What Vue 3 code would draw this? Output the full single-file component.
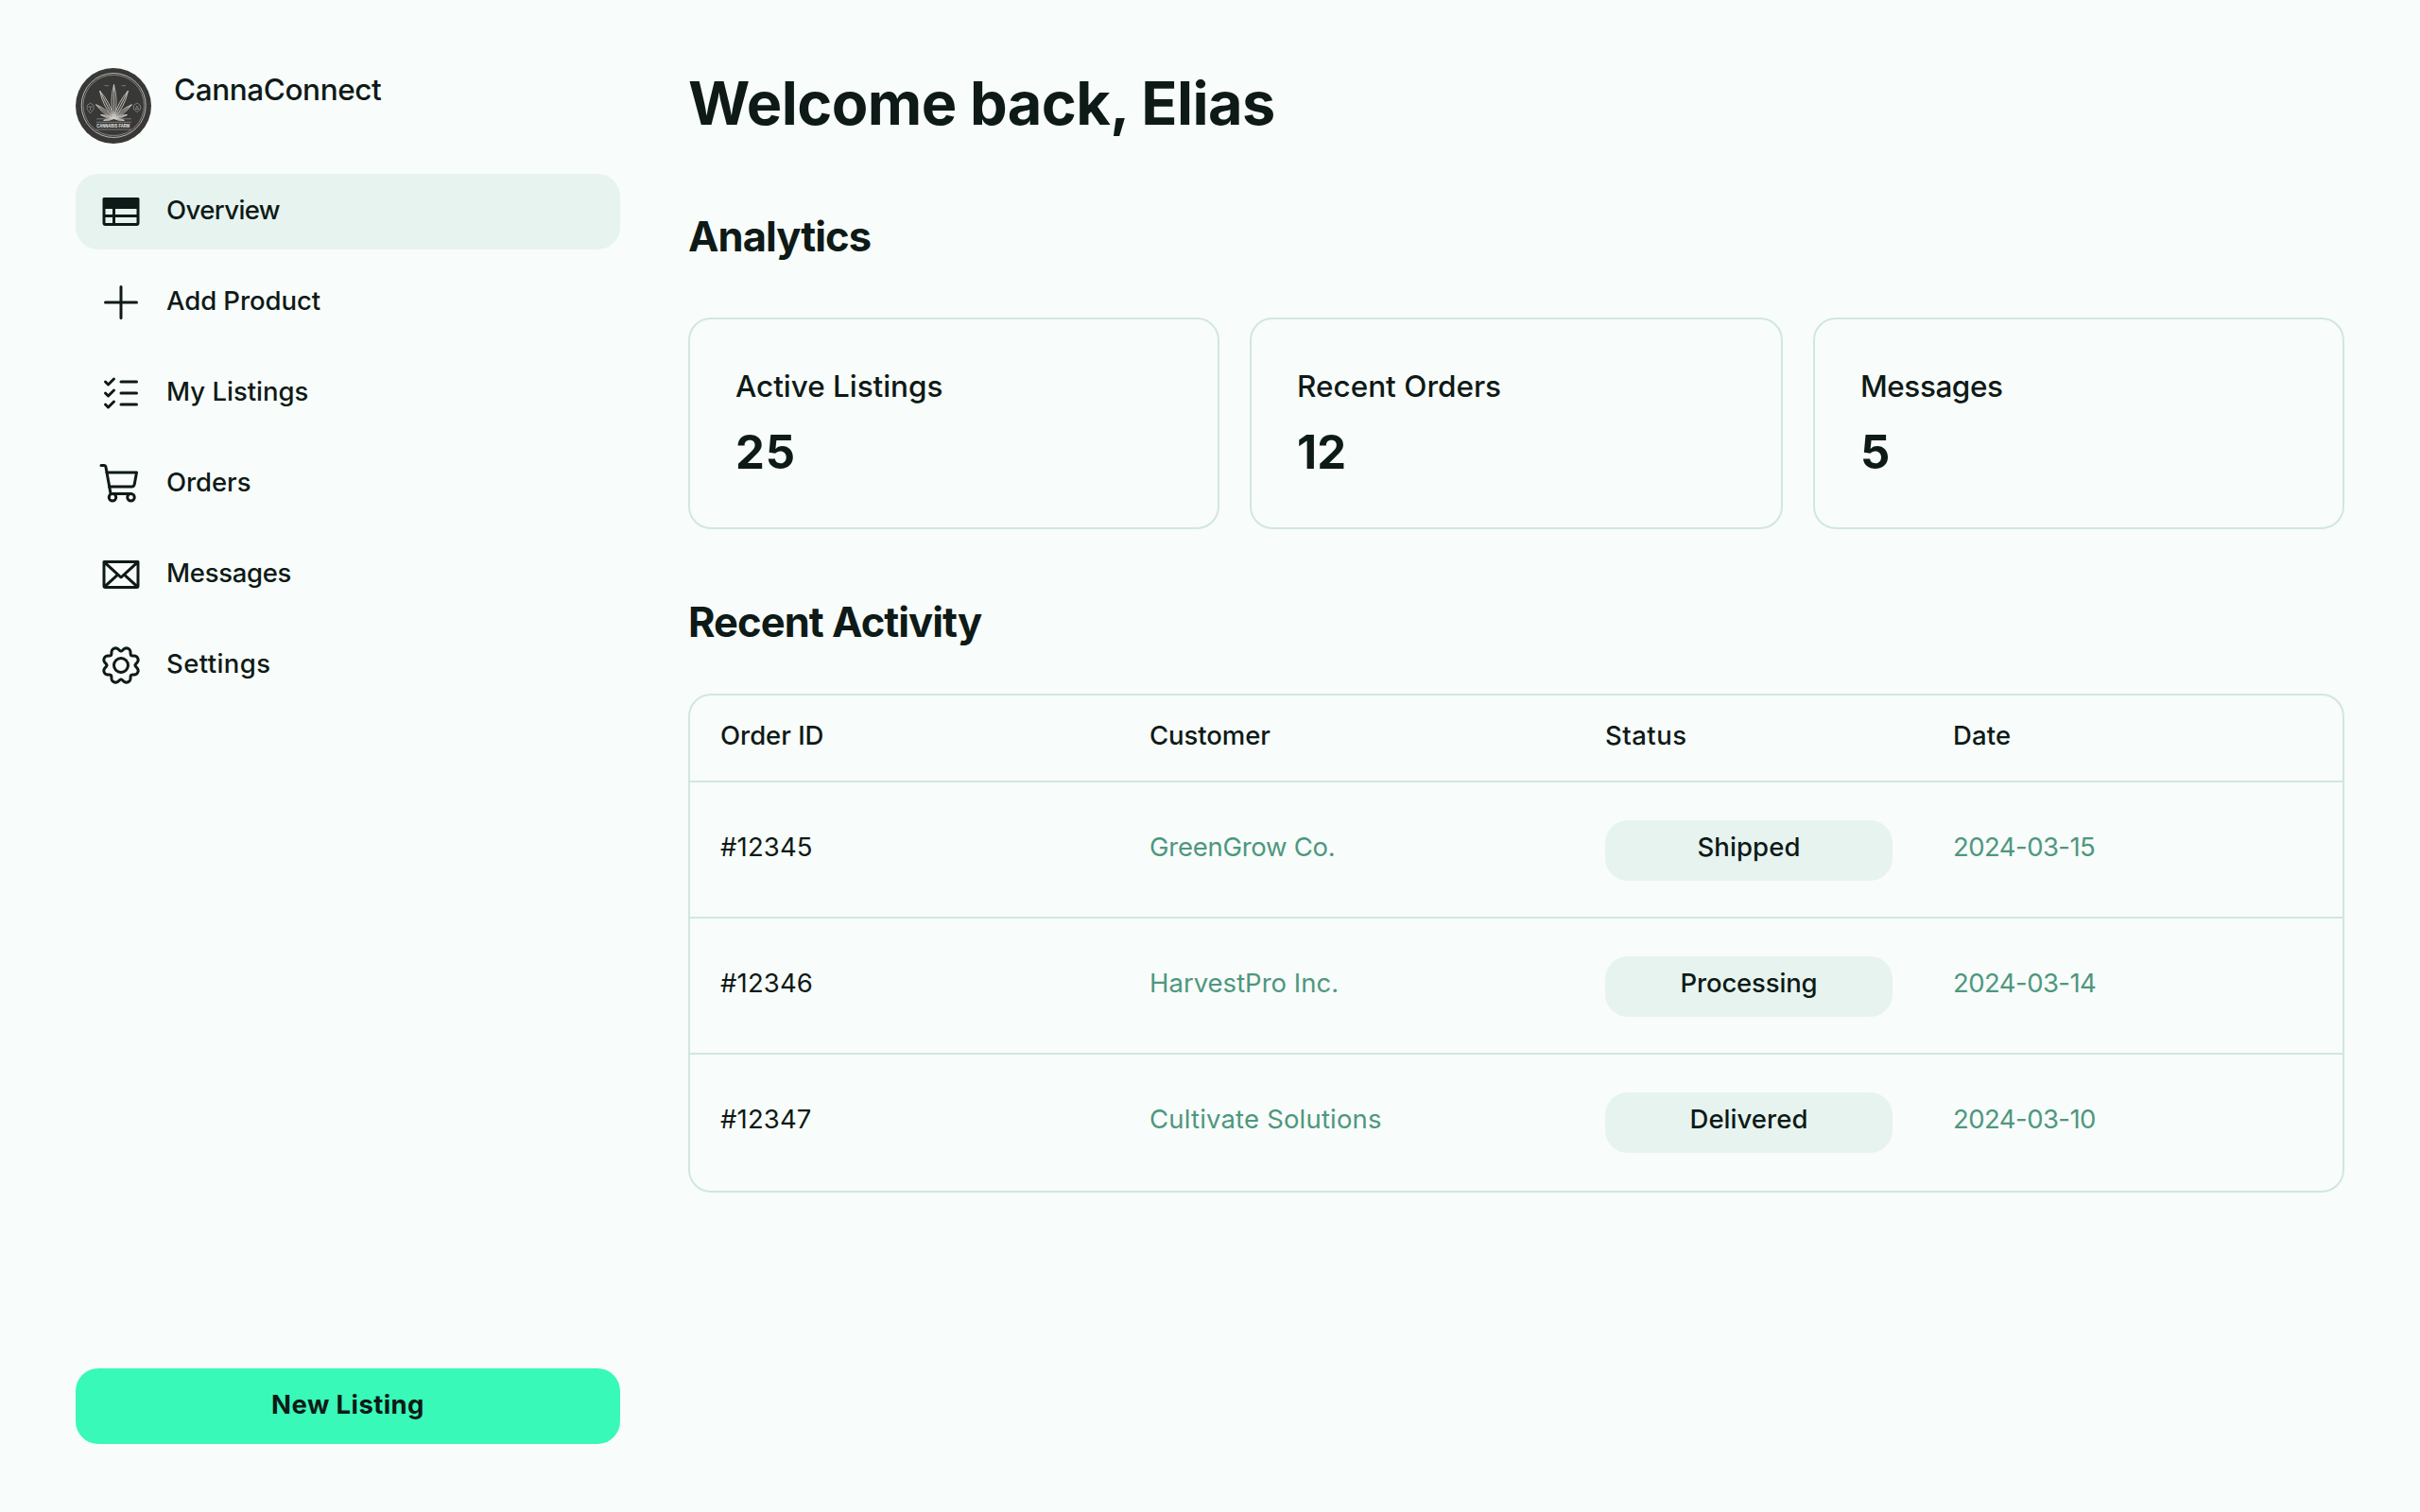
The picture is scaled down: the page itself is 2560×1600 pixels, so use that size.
<script setup>
const nav = [
  { icon: 'table', label: 'Overview', ls: -0.6, active: true },
  { icon: 'plus', label: 'Add Product', ls: -0.06 },
  { icon: 'checks', label: 'My Listings', ls: 0 },
  { icon: 'cart', label: 'Orders', ls: -0.06 },
  { icon: 'mail', label: 'Messages', ls: -0.3 },
  { icon: 'gear', label: 'Settings', ls: 0.4 },
]

const stats = [
  { label: 'Active Listings', value: '25', ls: -0.05, vls: 0.8 },
  { label: 'Recent Orders', value: '12', ls: 0, vls: 0.2 },
  { label: 'Messages', value: '5', ls: -0.44, vls: 0 },
]

const columns = [
  { label: 'Order ID', ls: -0.03 },
  { label: 'Customer', ls: -0.08 },
  { label: 'Status', ls: 0.48 },
  { label: 'Date', ls: 0.15 },
]

const orders = [
  { id: '#12345', customer: 'GreenGrow Co.', cls: -0.26, status: 'Shipped', sls: 0.1, date: '2024-03-15' },
  { id: '#12346', customer: 'HarvestPro Inc.', cls: 0, status: 'Processing', sls: -0.15, date: '2024-03-14' },
  { id: '#12347', customer: 'Cultivate Solutions', cls: 0.18, status: 'Delivered', sls: 0.05, date: '2024-03-10' },
]

const track = (v) => ({ letterSpacing: v + 'px' })

// Eight-lobed gear outline around the centre of a 256-unit box.
const gearPath =
  Array.from({ length: 144 }, (_, i) => {
    const a = (i / 144) * Math.PI * 2
    const wave = Math.cos(8 * a)
    const r = 93 - 11.5 * wave - 1.8 * Math.cos(16 * a)
    return `${i ? 'L' : 'M'}${(128 + r * Math.cos(a)).toFixed(1)},${(128 + r * Math.sin(a)).toFixed(1)}`
  }).join('') + 'Z'

// Leaflets of the emblem: angle from vertical, length, half width.
const leaflets = [
  [0, 36, 3],
  [-27, 33, 2.7],
  [27, 33, 2.7],
  [-52, 24, 2.1],
  [52, 24, 2.1],
  [-74, 14.5, 1.5],
  [74, 14.5, 1.5],
  [-100, 11, 1.1],
  [100, 11, 1.1],
]
const leafPath = ([, l, w]) => `M0,0Q${-w * 1.7},${-l * 0.5} 0,${-l}Q${w * 1.7},${-l * 0.5} 0,0ZM0,0V${-l}`
</script>

<template>
  <div class="page">
    <aside class="sidebar">
      <div class="brand">
        <svg class="logo" viewBox="0 0 80 80">
          <circle cx="40" cy="40" r="40" fill="#383837" />
          <g fill="none" stroke="#c9c6c1">
            <circle cx="40.2" cy="39.5" r="34" stroke-width="0.9" />
            <circle cx="40.2" cy="39.5" r="32.2" stroke-width="0.5" />
          </g>
          <g transform="translate(40.5 53.5)" fill="#a5a19c" fill-opacity="0.12" stroke="#d0ccc6" stroke-width="0.75">
            <path v-for="l in leaflets" :key="l[0]" :d="leafPath(l)" :transform="`rotate(${l[0]})`" />
          </g>
          <g fill="none" stroke="#aaa7a2" stroke-width="0.6">
            <path d="M22 53.8H35M46 53.8H59M22 57.3H59M22 65H59M30.5 18.7H35M48.5 18.7H53" />
            <path d="M15.6 37l3.4 2.5v4.2l-3.4 4-3.4-4v-4.2zM13.5 41h4.2M15.6 41v4" />
            <path d="M65 37l3.6 2.5v4.2L65 46.5l-3.6-2.8v-4.2zM63.3 43.5L65 40l1.7 3.5z" />
            <path d="M27 68.5c8 3 18 3 26 0" stroke-dasharray="1 1.4" opacity="0.6" />
          </g>
          <text class="emblem" x="22.3" y="63.2" textLength="35" lengthAdjust="spacingAndGlyphs">CANNABIS FARM</text>
        </svg>
        <span class="brand-name">CannaConnect</span>
      </div>

      <nav class="nav">
        <a v-for="n in nav" :key="n.label" class="nav-item" :class="{ active: n.active }">
          <svg class="icon" viewBox="0 0 256 256">
            <path
              v-if="n.icon === 'table'"
              fill="currentColor"
              fill-rule="evenodd"
              d="M32,48H224a8,8,0,0,1,8,8V192a16,16,0,0,1-16,16H40a16,16,0,0,1-16-16V56A8,8,0,0,1,32,48ZM40,112V144H80V112ZM96,112V144H216V112ZM40,160V192H80V160ZM96,160V192H216V160Z"
            />
            <path v-else-if="n.icon === 'plus'" class="line" d="M40,128H216M128,40V216" />
            <path
              v-else-if="n.icon === 'checks'"
              class="line"
              d="M128,128H216M128,64H216M128,192H216M88,48L56,80L40,64M88,112L56,144L40,128M88,176L56,208L40,192"
            />
            <g v-else-if="n.icon === 'cart'" class="line">
              <path d="M184,184H69.8L41.9,30.6A8,8,0,0,0,34.1,24H16" />
              <circle cx="80" cy="204" r="20" />
              <circle cx="184" cy="204" r="20" />
              <path d="M62.5,144H188.1a15.9,15.9,0,0,0,15.7-13.1L216,64H48" />
            </g>
            <path
              v-else-if="n.icon === 'mail'"
              fill="currentColor"
              d="M224,48H32a8,8,0,0,0-8,8V192a16,16,0,0,0,16,16H216a16,16,0,0,0,16-16V56A8,8,0,0,0,224,48Zm-96,85.15L52.57,64H203.43ZM98.71,128,40,181.81V74.19Zm11.84,10.85,12,11.05a8,8,0,0,0,10.82,0l12-11.05,58,53.15H52.57ZM157.29,128,216,74.18V181.82Z"
            />
            <g v-else class="line">
              <circle cx="128" cy="128" r="40" />
              <path :d="gearPath" />
            </g>
          </svg>
          <span class="nav-label" :style="track(n.ls)">{{ n.label }}</span>
        </a>
      </nav>

      <button class="cta">New Listing</button>
    </aside>

    <main class="main">
      <h1>Welcome back, Elias</h1>

      <h2 class="h-analytics">Analytics</h2>
      <section class="stats">
        <div v-for="s in stats" :key="s.label" class="stat">
          <div class="stat-label" :style="track(s.ls)">{{ s.label }}</div>
          <div class="stat-value" :style="track(s.vls)">{{ s.value }}</div>
        </div>
      </section>

      <h2 class="h-activity">Recent Activity</h2>
      <section class="table">
        <div class="row head">
          <span v-for="c in columns" :key="c.label" :style="track(c.ls)">{{ c.label }}</span>
        </div>
        <div v-for="o in orders" :key="o.id" class="row">
          <span class="order-id">{{ o.id }}</span>
          <span class="muted" :style="track(o.cls)">{{ o.customer }}</span>
          <span class="pill" :style="track(o.sls)">{{ o.status }}</span>
          <span class="muted date">{{ o.date }}</span>
        </div>
      </section>
    </main>
  </div>
</template>

<style>
body {
  background: #f8fcfa;
}
</style>

<style scoped>
.page {
  display: flex;
  gap: 72px;
  box-sizing: border-box;
  width: 2560px;
  height: 1600px;
  padding: 0 80px;
  background: #f8fcfa;
  color: #0e1a17;
  font-family: Inter, 'Liberation Sans', sans-serif;
  font-size: 27.5px;
}

.sidebar {
  display: flex;
  flex-direction: column;
  box-sizing: border-box;
  width: 576px;
  padding: 72px 0;
}
.brand {
  display: flex;
  gap: 24px;
  height: 80px;
}
.logo {
  width: 80px;
  height: 80px;
}
.emblem {
  font: 700 5px 'Liberation Sans', sans-serif;
  fill: #eeebe6;
}
.brand-name {
  font-size: 31.5px;
  font-weight: 500;
  line-height: 45px;
  letter-spacing: -0.4px;
}
.nav {
  display: flex;
  flex-direction: column;
  gap: 16px;
  margin-top: 32px;
}
.nav-item {
  display: flex;
  align-items: center;
  gap: 24px;
  height: 80px;
  padding: 0 24px;
  border-radius: 24px;
}
.nav-item.active {
  background: #e7f3ef;
}
.icon {
  width: 48px;
  height: 48px;
}
.line {
  fill: none;
  stroke: currentColor;
  stroke-width: 16;
  stroke-linecap: round;
  stroke-linejoin: round;
}
.nav-label {
  padding-bottom: 4px;
  font-weight: 500;
  line-height: 42px;
}
.cta {
  height: 80px;
  margin-top: auto;
  padding: 0 0 4px;
  border: 0;
  border-radius: 24px;
  background: #38f9b8;
  color: #0e1a17;
  font: 700 27.5px/42px Inter, 'Liberation Sans', sans-serif;
  letter-spacing: 0.41px;
}

.main {
  width: 1752px;
  padding-top: 69px;
}
h1 {
  margin: 0;
  font-size: 63px;
  font-weight: 700;
  line-height: 80px;
  letter-spacing: -0.56px;
}
h2 {
  margin: 0;
  font-size: 43.5px;
  font-weight: 700;
  line-height: 56px;
  letter-spacing: -0.95px;
}
.h-analytics {
  margin-top: 73px;
}
.h-activity {
  margin-top: 70px;
}
.stats {
  display: grid;
  grid-template-columns: 562px 564px 562px;
  gap: 32px;
  margin-top: 58px;
}
.stat {
  box-sizing: border-box;
  height: 224px;
  padding: 47px 48px 45px;
  border: 2px solid #d0e7df;
  border-radius: 24px;
}
.stat-label {
  font-size: 31.5px;
  font-weight: 500;
  line-height: 48px;
}
.stat-value {
  margin-top: 16px;
  font-size: 49px;
  font-weight: 700;
  line-height: 60px;
}
.table {
  margin-top: 48px;
  border: 2px solid #d0e7df;
  border-radius: 24px;
}
.row {
  display: grid;
  grid-template-columns: 454px 482px 304px 1fr;
  box-sizing: border-box;
  height: 144px;
  padding: 40px 32px 0;
  line-height: 56px;
  border-top: 2px solid #d0e7df;
}
.row > :nth-child(4) {
  padding-left: 64px;
}
.row:last-child {
  height: 146px;
}
.row.head {
  height: 90px;
  padding-top: 14px;
  border-top: 0;
  font-weight: 500;
}
.order-id {
  letter-spacing: 0.15px;
}
.muted {
  color: #4e977f;
}
.date {
  letter-spacing: -0.55px;
}
.pill {
  height: 64px;
  border-radius: 24px;
  background: #e7f3ef;
  font-weight: 500;
  text-align: center;
}
</style>
